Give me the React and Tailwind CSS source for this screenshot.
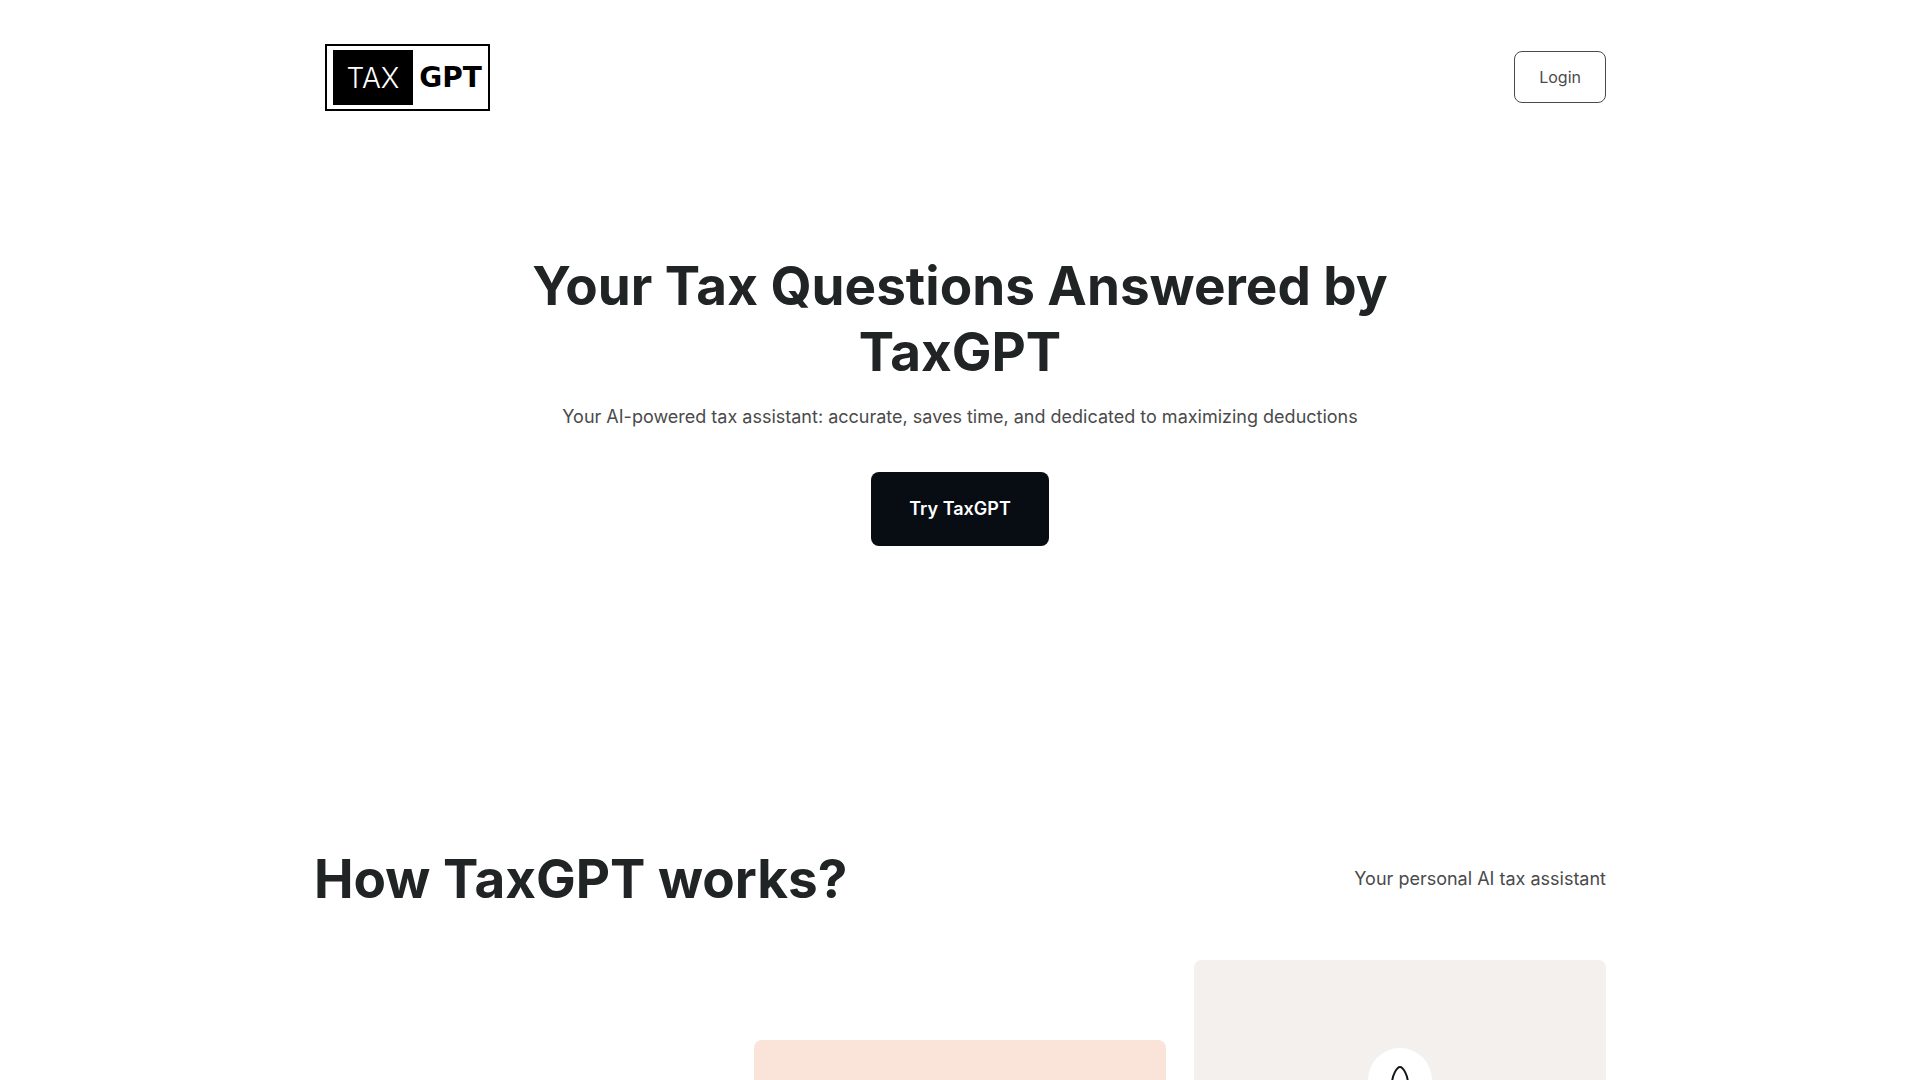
function Logo() {
  return (
    <a
      href="#home"
      aria-label="TaxGPT home"
      className="ml-[11px] flex h-[67px] w-[165px] border-2 border-black bg-white py-1 pl-[6px]"
    >
      <span className="flex w-20 shrink-0 items-center justify-center bg-black font-['Inter',sans-serif] text-[28px] leading-none font-light text-white">
        TAX
      </span>
      <span className="flex flex-1 items-center justify-center font-['DejaVu_Sans',sans-serif] text-[28px] leading-none font-bold text-black">
        GPT
      </span>
    </a>
  );
}

function RocketIcon() {
  return (
    <svg
      viewBox="0 0 32 40"
      className="h-10 w-8"
      fill="none"
      stroke="#111517"
      strokeWidth="2"
      strokeLinecap="round"
      strokeLinejoin="round"
      aria-hidden="true"
    >
      <path d="M16 1C19 1 24 9 24 18C24 22 22 26 20.500 29H11.500C10 26 8 22 8 18C8 9 13 1 16 1Z" />
      <circle cx="16" cy="20" r="3" />
      <path d="M9 22L4 26V33L11.500 29M23 22L28 26V33L20.500 29M16 33V38" />
    </svg>
  );
}

export default function App() {
  return (
    <div className="flex h-screen flex-col overflow-hidden bg-white px-6 font-['Inter',sans-serif] text-[#4a4a4a]">
      <div className="mx-auto flex w-full max-w-[1292px] flex-1 flex-col">
        <header className="flex items-start justify-between pt-11">
          <Logo />
          <button
            type="button"
            className="mt-[7px] h-[52px] rounded-lg border border-[#4a4a4a] px-6 text-base"
          >
            Login
          </button>
        </header>

        <main className="flex flex-1 flex-col">
          <section className="mx-auto flex max-w-[900px] flex-col items-center pt-[142px] text-center">
            <h1 className="text-[53px] leading-[66px] font-bold text-[#202424]">
              Your Tax Questions Answered by TaxGPT
            </h1>
            <p className="mt-[18px] text-lg leading-7">
              Your AI-powered tax assistant: accurate, saves time, and dedicated to maximizing deductions
            </p>
            <button
              type="button"
              className="mt-[41px] h-[74px] rounded-lg bg-[#080d14] px-[38px] text-lg font-semibold text-white"
            >
              Try TaxGPT
            </button>
          </section>

          <section className="flex flex-1 flex-col pt-[300px]">
            <div className="flex items-center justify-between">
              <h2 className="text-[53px] leading-[66px] font-bold text-[#202424]">
                How TaxGPT works?
              </h2>
              <p className="text-lg leading-7">Your personal AI tax assistant</p>
            </div>
            <div className="mt-12 grid flex-1 grid-cols-3 gap-7">
              <div className="col-start-2 mt-20 rounded-t-lg bg-[#fae4d9]" />
              <div className="flex h-[120px] justify-center rounded-t-lg bg-[#f4f0ed] pt-[88px]">
                <div className="flex size-16 shrink-0 justify-center rounded-full bg-white pt-[18px]">
                  <RocketIcon />
                </div>
              </div>
            </div>
          </section>
        </main>
      </div>
    </div>
  );
}
